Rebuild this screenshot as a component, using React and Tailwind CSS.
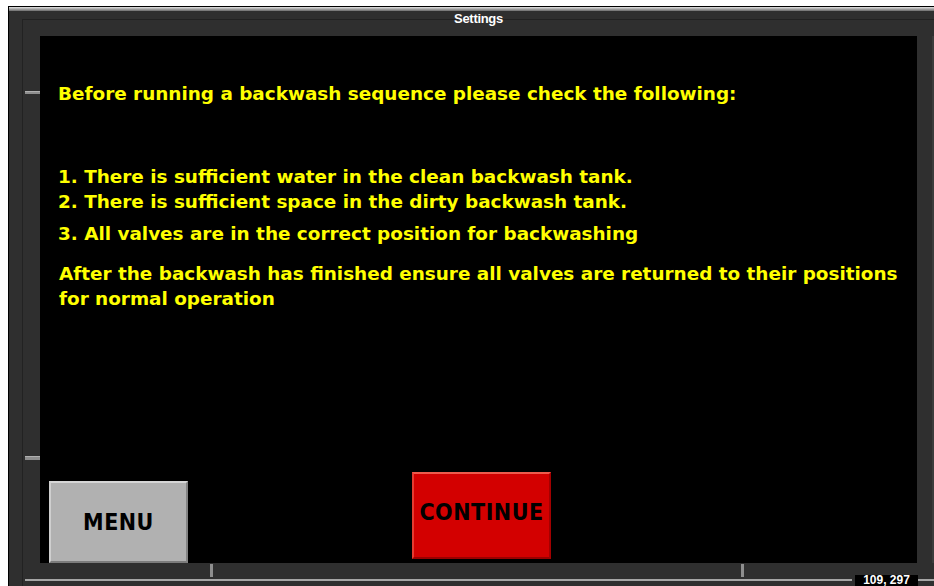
export default function App() {
  const body = { fontFamily: '"DejaVu Sans", Verdana, sans-serif' };
  const btn = { fontFamily: '"DejaVu Sans Condensed", "DejaVu Sans", Verdana, sans-serif' };

  return (
    <div className="w-[934px] h-[586px] bg-white overflow-hidden pt-[6px] pl-[8px]">
      <div className="w-[926px] h-[580px] border-t border-l border-black bg-[#2f2f2f] flex flex-col">
        {/* window edge highlight */}
        <div className="h-[4px] bg-gradient-to-b from-[#e4e4e4] to-[#6c6c6c]" />

        {/* title */}
        <div className="h-[8px] relative z-10">
          <div
            className="ml-[31px] w-[877px] text-center text-white font-bold text-[13px] leading-[14px] pt-[1px] tracking-[-0.3px]"
            style={{ fontFamily: '"Liberation Sans", Arial, sans-serif' }}
          >
            Settings
          </div>
        </div>

        {/* inner panel */}
        <div className="flex-1 ml-[13px] border-l border-t border-[#222] flex flex-col">
          <div className="h-[16px]" />

          <div className="flex">
            {/* left slider gutter */}
            <div className="w-[17px] flex flex-col">
              <div className="mt-[55px] ml-[2px] w-[15px] h-[3px] bg-[#8e8e8e] border-t border-[#b0b0b0]" />
              <div className="mt-[362px] ml-[2px] w-[15px] h-[4px] bg-[#8e8e8e] border-t border-[#b0b0b0]" />
            </div>

            {/* screen */}
            <div className="w-[877px] h-[527px] bg-black flex flex-col pl-[18px] text-[#ffff00] font-bold" style={body}>
              <div className="text-[18.4px] leading-[25px] pt-[45px]">
                <p>Before running a backwash sequence please check the following:</p>
                <p className="mt-[58px]">1. There is sufficient water in the clean backwash tank.</p>
                <p>2. There is sufficient space in the dirty backwash tank.</p>
                <p className="mt-[7px]">3. All valves are in the correct position for backwashing</p>
                <p className="mt-[15px] pl-[1px]">
                  After the backwash has finished ensure all valves are returned to their positions for normal operation
                </p>
              </div>

              <div className="mt-auto flex items-end -ml-[9px]">
                <button
                  className="w-[139px] h-[82px] bg-[#b1b1b1] border-t-2 border-l-2 border-t-[#d6d6d6] border-l-[#cfcfcf] border-b-2 border-r-2 border-b-[#7c7c7c] border-r-[#838383] flex items-center justify-center text-black font-bold text-[23px] tracking-[0.5px]"
                  style={btn}
                >
                  MENU
                </button>
                <button
                  className="ml-[224px] mb-[4px] w-[139px] h-[87px] bg-[#d30000] border-t-2 border-l-2 border-t-[#ef5a4c] border-l-[#e63b30] border-b-2 border-r-2 border-b-[#9a0000] border-r-[#a30000] flex items-center justify-center pb-[6px] text-black font-bold text-[23px] tracking-[0.5px]"
                  style={btn}
                >
                  CONTINUE
                </button>
              </div>
            </div>

            <div className="flex-1 border-r-2 border-[#3c3c3c]" />
          </div>

          {/* bottom slider track and cursor readout */}
          <div className="flex-1 flex">
            <div className="w-[832px] flex flex-col">
              <div className="h-[14px] flex">
                <div className="ml-[187px] mt-[1px] w-[3px] h-[13px] bg-[#8e8e8e]" />
                <div className="ml-[528px] mt-[1px] w-[3px] h-[13px] bg-[#8e8e8e]" />
              </div>
              <div className="ml-[2px] mt-[2px] w-[827px] h-[2px] bg-[#a6a6a6]" />
            </div>
            <div
              className="self-end w-[63px] h-[11px] bg-black text-white font-bold text-[12px] leading-[11px] text-center"
              style={{ fontFamily: '"Liberation Sans", Arial, sans-serif' }}
            >
              109, 297
            </div>
            <div className="flex-1 pt-[16px]">
              <div className="h-[2px] bg-[#a6a6a6]" />
            </div>
          </div>
        </div>
      </div>
    </div>
  );
}
